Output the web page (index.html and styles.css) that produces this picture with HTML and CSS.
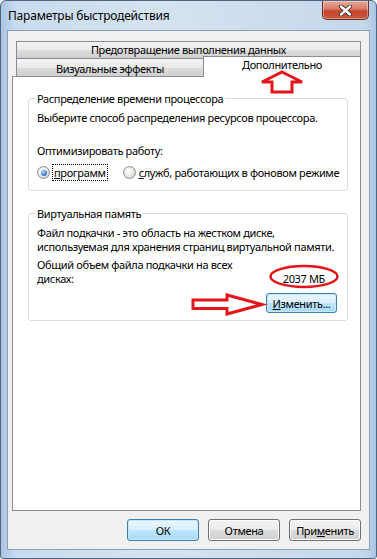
FILE: index.html
```html
<!DOCTYPE html>
<html lang="ru">

<head>
    <meta charset="UTF-8">
    <title>Параметры быстродействия</title>
    <link rel="stylesheet" href="styles.css">
</head>

<body>
    <div class="window">
        <div class="titlebar">
            <span class="title">Параметры быстродействия</span>
            <div class="close-btn">
                <svg width="13" height="11" viewBox="0 0 13 11">
                    <path d="M2 1.5 L11 9.5 M11 1.5 L2 9.5" stroke="#3b2a28" stroke-width="4.2" stroke-linecap="round" />
                    <path d="M2 1.5 L11 9.5 M11 1.5 L2 9.5" stroke="#ffffff" stroke-width="2.4" stroke-linecap="round" />
                </svg>
            </div>
        </div>

        <div class="client">
            <div class="tab-row">
                <div class="tab wide">Предотвращение выполнения данных</div>
            </div>
            <div class="tab-row">
                <div class="tab first">Визуальные эффекты</div>
                <div class="tab active">Дополнительно</div>
            </div>

            <div class="pane">
                <fieldset class="group">
                    <legend>Распределение времени процессора</legend>
                    <div class="text">Выберите способ распределения ресурсов процессора.</div>
                    <div class="text optimize">Оптимизировать работу:</div>
                    <div class="radios">
                        <label class="radio">
                            <span class="dot checked"></span>
                            <span class="focus"><u>п</u>рограмм</span>
                        </label>
                        <label class="radio">
                            <span class="dot"></span>
                            <span><u>с</u>лужб, работающих в фоновом режиме</span>
                        </label>
                    </div>
                </fieldset>

                <fieldset class="group memory">
                    <legend>Виртуальная память</legend>
                    <div class="text lines">Файл подкачки - это область на жестком диске,<br>используемая для хранения страниц виртуальной памяти.</div>
                    <div class="total">
                        <div class="text lines">Общий объем файла подкачки на всех<br>дисках:</div>
                        <div class="size">2037 МБ</div>
                    </div>
                    <div class="change-row">
                        <button class="btn blue change"><u>И</u>зменить...</button>
                    </div>
                </fieldset>
            </div>

            <div class="footer">
                <button class="btn blue">ОК</button>
                <button class="btn">Отмена</button>
                <button class="btn">При<u>м</u>енить</button>
            </div>
        </div>

        <!-- red marks drawn over the dialog -->
        <svg class="marks" width="377" height="559" viewBox="0 0 377 559">
            <path d="M282 72 L302 82 L292 82 L292 92 L272 92 L272 82 L262 82 Z" fill="none" stroke="#e5141b" stroke-width="3" stroke-linejoin="miter" />
            <ellipse cx="304" cy="276.5" rx="33.5" ry="10.5" fill="none" stroke="#e5141b" stroke-width="2.5" />
            <path d="M193 300 L227 300 L227 295 L262 304.5 L227 314 L227 308.5 L193 308.5 Z" fill="none" stroke="#e5141b" stroke-width="3" />
        </svg>
    </div>
</body>

</html>
```

FILE: styles.css
```css
body {
    margin: 0;
    font-family: "Noto Sans", sans-serif;
    font-size: 11px;
    letter-spacing: -0.35px;
    color: #000;
    background-color: #fff;
}

.window {
    position: relative;
    width: 377px;
    height: 559px;
    box-sizing: border-box;
    padding-bottom: 8px;
    display: flex;
    flex-direction: column;
    border: 1px solid #50667e;
    border-radius: 6px 6px 3px 3px;
    background: linear-gradient(90deg, #a9c5e3 0%, #c9dbee 4%, #d5e3f1 40%, #cddced 75%, #c4d8ec 97%, #a9c5e3 100%);
    white-space: nowrap;
}

/* Title bar */
.titlebar {
    height: 29px;
    display: flex;
    align-items: center;
    padding-left: 7px;
    padding-right: 7px;
}

.title {
    font-size: 12px;
    letter-spacing: -0.2px;
    color: #000;
}

.close-btn {
    margin-left: auto;
    align-self: flex-start;
    width: 45px;
    height: 18px;
    display: flex;
    align-items: center;
    justify-content: center;
    border: 1px solid #6b3128;
    border-top: none;
    border-radius: 0 0 5px 5px;
    background: linear-gradient(#e7a899 0%, #d77a66 45%, #c4432c 55%, #c85a3f 100%);
    box-shadow: inset 0 0 0 1px rgba(255, 255, 255, 0.35);
}

/* Client area */
.client {
    flex: 1;
    margin: 0 6px;
    padding: 10px 8px 0 6px;
    display: flex;
    flex-direction: column;
    background-color: #f0f0f0;
    border: 1px solid #8d9fb4;
}

.tab-row {
    display: flex;
    margin-left: 2px;
}

.tab {
    height: 16px;
    line-height: 16px;
    text-align: center;
    border: 1px solid #898c95;
    border-bottom: none;
    background: linear-gradient(#f3f3f3 0%, #ebebeb 50%, #dddddd 51%, #cfcfcf 100%);
    color: #000;
}

.tab.wide {
    flex: 1;
}

.tab.first {
    width: 186px;
    height: 17px;
    line-height: 19px;
    border-right: none;
}

.tab.active {
    flex: 1;
    height: 20px;
    line-height: 16px;
    margin-top: -2px;
    margin-bottom: -1px;
    background: #fff;
    position: relative;
    z-index: 1;
}

.pane {
    flex: 1;
    margin-left: -2px;
    padding: 14px 12px 0 15px;
    background-color: #fff;
    border: 1px solid #898c95;
}

/* Group boxes */
.group {
    margin: 0;
    padding: 5px 8px 10px 8px;
    border: 1px solid #d5dfe5;
    border-radius: 3px;
}

.group legend {
    padding: 0 2px;
    margin-left: -2px;
    line-height: 15px;
}

.text {
    line-height: 13px;
}

.text.lines {
    line-height: 14px;
}

.optimize {
    margin-top: 20px;
}

.radios {
    display: flex;
    gap: 16px;
    margin-top: 8px;
}

.radio {
    display: flex;
    align-items: center;
    gap: 3px;
}

.dot {
    width: 11px;
    height: 11px;
    border-radius: 50%;
    border: 1px solid #8b8b8b;
    background: radial-gradient(circle at 40% 35%, #ffffff 0%, #e4e4e4 60%, #c8c8c8 100%);
    display: flex;
    align-items: center;
    justify-content: center;
}

.dot.checked::after {
    content: "";
    width: 6px;
    height: 6px;
    border-radius: 50%;
    background: radial-gradient(circle at 40% 35%, #b9e0ff 0%, #3c86d3 55%, #1b4f97 100%);
}

.focus {
    outline: 1px dotted #000;
    outline-offset: 0;
    padding: 0 1px;
    line-height: 15px;
}

.memory {
    margin-top: 15px;
    padding-bottom: 7px;
}

.total {
    display: flex;
    align-items: flex-end;
    justify-content: space-between;
    margin-top: 4px;
}

.size {
    line-height: 14px;
    padding-right: 14px;
}

.change-row {
    display: flex;
    justify-content: flex-end;
    margin-top: 7px;
    padding-right: 2px;
}

/* Buttons */
.btn {
    width: 72px;
    height: 22px;
    padding: 0;
    font-family: "Noto Sans", sans-serif;
    font-size: 11px;
    letter-spacing: -0.35px;
    color: #000;
    border: 1px solid #707070;
    border-radius: 3px;
    background: linear-gradient(#f2f2f2 0%, #ebebeb 50%, #dddddd 51%, #cfcfcf 100%);
    box-shadow: inset 0 0 0 1px #fcfcfc;
}

.btn.blue {
    border-color: #3c7fb1;
    background: linear-gradient(#eaf6fd 0%, #d9f0fc 50%, #bee6fd 51%, #a7d9f5 100%);
    box-shadow: inset 0 0 0 1px #c8e8fa;
}

.change {
    width: 71px;
    height: 20px;
}

.footer {
    display: flex;
    justify-content: flex-end;
    gap: 9px;
    padding: 8px 0 8px 0;
}

.marks {
    position: absolute;
    left: -1px;
    top: -1px;
    z-index: 2;
    pointer-events: none;
}
```
